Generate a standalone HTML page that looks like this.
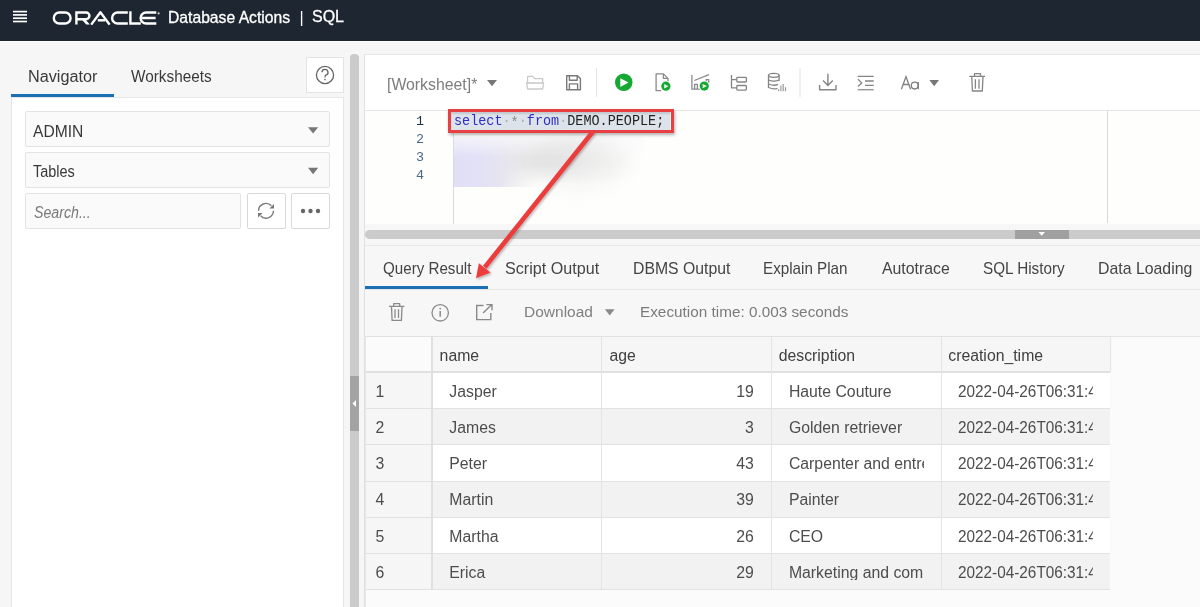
<!DOCTYPE html>
<html><head><meta charset="utf-8">
<style>
*{box-sizing:border-box;margin:0;padding:0}
html,body{width:1200px;height:607px;overflow:hidden;-webkit-font-smoothing:antialiased;background:#f6f6f6;font-family:"Liberation Sans",sans-serif;color:#333}
.a{position:absolute}
.t{position:absolute;white-space:nowrap;line-height:1}
svg{position:absolute;overflow:visible}
.tab{font-size:15.5px;color:#3a3a3a}
.cell{position:absolute;font-size:15.8px;color:#4d4d4d;white-space:nowrap;line-height:1}
</style></head><body><div style="position:absolute;left:0;top:0;width:1200px;height:607px;will-change:transform">
<!-- header -->
<div class="a" style="left:0;top:0;width:1200px;height:41px;background:#1e2631"></div>
<div class="a" style="left:0;top:41px;width:1200px;height:1px;background:#fff"></div>
<svg style="left:0;top:0" width="200" height="41" viewBox="0 0 200 41">
  <g stroke="#fff" stroke-width="1.7" fill="none">
    <line x1="13" y1="11.6" x2="27" y2="11.6"/><line x1="13" y1="14.9" x2="27" y2="14.9"/><line x1="13" y1="18.2" x2="27" y2="18.2"/><line x1="13" y1="21.5" x2="27" y2="21.5"/>
  </g>
  <g stroke="#fff" stroke-width="2.4" fill="none">
    <rect x="53.8" y="12.5" width="16.8" height="11" rx="5.5"/>
    <path d="M76.4,24.6 V12.5 H86.1 A3.35,3.35 0 0 1 86.1,19.2 H77"/></g><polygon points="80.6,18.2 84.2,18.2 89.9,24.6 86.2,24.6" fill="#fff"/><g stroke="#fff" stroke-width="2.4" fill="none">
    <path d="M91.2,24.6 L100.4,12.3 L109.6,24.6" stroke-linejoin="round"/>
    <path d="M97.8,20.3 H105"/>
    <path d="M127.8,12.5 H117.6 A5.5,5.5 0 0 0 117.6,23.5 H127.8"/>
    <path d="M130.4,11.3 V23.5 H140.8"/>
    <path d="M156.3,12.5 H146.1 A5.5,5.5 0 0 0 146.1,23.5 H156.3 M142,18 H155.6"/>
  </g>
  <circle cx="158.6" cy="13.4" r="1.1" fill="#ccc"/>
</svg>
<div class="t" style="left:168px;top:9.9px;color:#fff;font-size:15.7px;-webkit-text-stroke:0.3px #fff">Database Actions</div>
<div class="t" style="left:299.5px;top:10px;color:#fff;font-size:16px">|</div>
<div class="t" style="left:312px;top:8.8px;color:#fff;font-size:16px;-webkit-text-stroke:0.3px #fff">SQL</div>

<!-- left panel tabs -->
<div class="t" style="left:28.13px;top:69.00px;font-size:16px;color:#3a3a3a;transform:scaleX(1.0134);transform-origin:0 0">Navigator</div>
<div class="t" style="left:131.40px;top:68.80px;font-size:16px;color:#3a3a3a;transform:scaleX(0.9576);transform-origin:0 0">Worksheets</div>
<div class="a" style="left:11px;top:94px;width:103px;height:3px;background:#1b6fb5"></div>
<div class="a" style="left:306px;top:57px;width:38px;height:36px;background:#fff;border:1px solid #e3e3e3"></div>
<svg style="left:0;top:0" width="1" height="1">
  <circle cx="325" cy="75" r="8.6" stroke="#666" stroke-width="1.3" fill="none"/>
  <path d="M322,72.3 A3,3 0 1 1 325.8,75.2 C325,75.6 325,76.4 325,77.5" stroke="#666" stroke-width="1.3" fill="none"/>
  <circle cx="325" cy="79.6" r="0.8" fill="#666"/>
</svg>

<!-- left white panel -->
<div class="a" style="left:11px;top:97px;width:333px;height:520px;background:#fff;border:1px solid #e6e6e6"></div>
<div class="a" style="left:25px;top:111px;width:305px;height:36px;background:#fafafa;border:1px solid #e3e3e3;border-radius:2px"></div>
<div class="a" style="left:25px;top:152px;width:305px;height:36px;background:#fafafa;border:1px solid #e3e3e3;border-radius:2px"></div>
<div class="a" style="left:25px;top:193px;width:216px;height:36px;background:#fafafa;border:1px solid #e3e3e3;border-radius:2px"></div>
<div class="a" style="left:247px;top:193px;width:39px;height:36px;background:#fff;border:1px solid #d9d9d9;border-radius:2px"></div>
<div class="a" style="left:291px;top:193px;width:39px;height:36px;background:#fff;border:1px solid #d9d9d9;border-radius:2px"></div>
<div class="t" style="left:33.2px;top:123.8px;font-size:16px;color:#383838;transform:scaleX(0.975);transform-origin:0 0">ADMIN</div>
<div class="t" style="left:33.3px;top:164.3px;font-size:16px;color:#383838;transform:scaleX(0.9033);transform-origin:0 0">Tables</div>
<div class="t" style="left:34.2px;top:204.6px;font-size:16px;color:#7a7a7a;font-style:italic;transform:scaleX(0.8862);transform-origin:0 0">Search...</div>
<svg style="left:0;top:0" width="1" height="1">
  <path d="M308,127.2 H318.2 L313.1,133.5 Z" fill="#777"/>
  <path d="M308,167.8 H318.2 L313.1,174.2 Z" fill="#777"/>
  <g stroke="#7a7a7a" stroke-width="1.4" fill="none">
    <path d="M258.5,210.8 A7.5,7.5 0 0 1 271.4,205.8"/>
    <path d="M273.5,210.8 A7.5,7.5 0 0 1 260.6,215.8"/>
  </g>
  <path d="M274,204 V208.6 H269.4 Z" fill="#777"/>
  <path d="M258,217.6 V213 H262.6 Z" fill="#777"/>
  <circle cx="303" cy="211" r="2.2" fill="#666"/><circle cx="310.5" cy="211" r="2.2" fill="#666"/><circle cx="318" cy="211" r="2.2" fill="#666"/>
</svg>

<!-- splitter -->
<div class="a" style="left:350px;top:54px;width:9px;height:560px;background:#cbcbcb;border-radius:4px 4px 0 0"></div>
<div class="a" style="left:350px;top:376px;width:9px;height:55px;background:#a3a3a3"></div>
<svg style="left:0;top:0" width="1" height="1"><path d="M352.5,403.5 L356,400 V407 Z" fill="#fff"/></svg>

<!-- editor panel -->
<div class="a" style="left:364px;top:54px;width:840px;height:560px;background:#f7f7f7;border-left:1px solid #e0e0e0;border-top:1px solid #e6e6e6"></div>
<div class="a" style="left:365px;top:55px;width:840px;height:56px;background:#fff;border-bottom:1px solid #e6e6e6"></div>
<div class="a" style="left:365px;top:111px;width:840px;height:113px;background:#fefefd"></div>


<!-- toolbar -->
<div class="t" style="left:386.61px;top:76.60px;font-size:16px;color:#7d7d7d;transform:scaleX(0.9889);transform-origin:0 0">[Worksheet]*</div>
<svg style="left:0;top:0" width="1" height="1">
  <path d="M487,80 H497 L492,86.3 Z" fill="#777"/>
  <g fill="none" stroke="#c9c9c9" stroke-width="1.3" stroke-linejoin="round">
    <path d="M527.6,83 V76.4 H532.8 L534.6,78.6 H542.6 V83"/>
    <path d="M526.6,83 H543.6 L542.6,89 H527.6 Z"/>
  </g>
  <g fill="none" stroke="#7a7a7a" stroke-width="1.4" stroke-linejoin="round">
    <path d="M566.7,75.7 H577.5 L580.4,78.4 V89.8 H566.7 Z"/>
    <path d="M569.4,75.7 V80.3 H577.2 V75.9"/>
    <path d="M569.4,89.8 V83.9 H577.6 V89.8"/>
  </g>
  <rect x="596" y="68" width="1" height="29" fill="#e4e4e4"/>
  <circle cx="623.75" cy="82.25" r="8.75" fill="#17a834"/>
  <path d="M620.3,78.2 L628.5,82.6 L620.3,87 Z" fill="#fff"/>
  <g fill="none" stroke="#8a8a8a" stroke-width="1.3" stroke-linejoin="round">
    <path d="M661,90.7 H656.1 V73.9 H663.4 L668,78.4 V82"/>
    <path d="M663.4,73.9 V78.4 H668"/>
  </g>
  <circle cx="665.9" cy="86.2" r="5.6" fill="#fff"/>
  <circle cx="665.9" cy="86.2" r="4.6" fill="#17a834"/>
  <path d="M664.2,84 L668.6,86.2 L664.2,88.4 Z" fill="#e9f9ea"/>
  <g fill="none" stroke="#8a8a8a" stroke-width="1.3">
    <path d="M691.9,75 V89.2 H700"/>
    <path d="M694.3,80.5 L709,74.7"/>
    <path d="M694.6,89 V84.3 H697.4 V89"/>
    <path d="M706.2,82 V79.6 H708.7 V83"/>
  </g>
  <circle cx="704.25" cy="86.1" r="5.6" fill="#fff"/>
  <circle cx="704.25" cy="86.1" r="4.6" fill="#17a834"/>
  <path d="M702.6,83.9 L707,86.1 L702.6,88.3 Z" fill="#e9f9ea"/>
  <g fill="none" stroke="#858585" stroke-width="1.3" stroke-linejoin="round">
    <path d="M731.5,75 V87.8 H736.6 M731.5,79.7 H736.6"/>
    <rect x="736.8" y="77.4" width="9.6" height="4.6" rx="0.8"/>
    <rect x="736.8" y="85.5" width="9.6" height="4.6" rx="0.8"/>
  </g>
  <g fill="none" stroke="#858585" stroke-width="1.3">
    <ellipse cx="773.8" cy="75.3" rx="5.3" ry="2"/>
    <path d="M768.5,75.3 V87.5 Q773.8,89.8 777.5,88.3"/>
    <path d="M779.1,75.3 V81"/>
    <path d="M768.5,80 Q773.8,82.3 779.1,80"/>
    <path d="M768.5,84 Q773.8,86.3 778,84.4"/>
  </g>
  <g stroke="#999" stroke-width="1.2">
    <path d="M778.6,91.2 V89.2 M780.9,91.2 V85.6 M783.2,91.2 V84 M785.5,91.2 V87.2"/>
  </g>
  <rect x="799.5" y="68" width="1" height="29" fill="#e4e4e4"/>
  <g fill="none" stroke="#858585" stroke-width="1.4" stroke-linejoin="round">
    <path d="M827.9,73.7 V85.2 M823,80.6 L827.9,85.4 L832.8,80.6"/>
    <path d="M819.6,85 V89.8 H836 V85"/>
  </g>
  <g fill="none" stroke="#858585" stroke-width="1.3">
    <path d="M857.7,76.3 H873.7 M865,81 H873.7 M865,85.3 H873.7"/>
    <path d="M858,79.3 L861.7,82.9 L858,86.5"/>
  </g>
  <path d="M857.7,89.7 H873.7" stroke="#9a9a9a" stroke-width="1.5"/>
  <g fill="none" stroke="#7f7f7f" stroke-width="1.3">
    <path d="M901.4,89.3 L906,76.6 L910.6,89.3 M903.2,84.5 H908.8"/>
    <circle cx="914.7" cy="85.6" r="3.4"/>
    <path d="M918.3,82 V89.2"/>
  </g>
  <path d="M929.3,80 H939 L934.2,86.3 Z" fill="#777"/>
  <g fill="none" stroke="#858585" stroke-width="1.3" stroke-linejoin="round">
    <path d="M969.3,76.4 H985 M974.5,76.2 V73.6 H980.5 V76.2"/>
    <path d="M971.8,76.6 L972.4,91 H982.3 L983,76.6"/>
    <path d="M975.4,79.3 V88.7 M979,79.3 V88.7"/>
  </g>
</svg>

<!-- editor content -->
<div class="a" style="left:453px;top:111px;width:1px;height:113px;background:#dcdcdc"></div>
<div class="a" style="left:1107px;top:111px;width:1px;height:112px;background:#d9d9d9"></div>
<div class="a" style="left:365px;top:224px;width:840px;height:21px;background:#f7f7f7"></div>
<div class="a" style="left:365px;top:230px;width:840px;height:9px;background:#cbcbcb;border-radius:4.5px 0 0 4.5px"></div>
<div class="a" style="left:1015px;top:230px;width:54px;height:9px;background:#a0a0a0"></div>
<svg style="left:0;top:0" width="1" height="1"><path d="M1038.5,232 H1045 L1041.75,235.8 Z" fill="#fff"/></svg>
<div class="a" style="left:365px;top:245px;width:840px;height:1px;background:#e8e8e8"></div>
<div class="t" style="left:416px;top:114.5px;font-family:'Liberation Mono',monospace;font-size:13.4px;color:#1f3346">1</div>
<div class="t" style="left:416px;top:132.6px;font-family:'Liberation Mono',monospace;font-size:13.4px;color:#4a6880">2</div>
<div class="t" style="left:416px;top:150.7px;font-family:'Liberation Mono',monospace;font-size:13.4px;color:#4a6880">3</div>
<div class="t" style="left:416px;top:168.8px;font-family:'Liberation Mono',monospace;font-size:13.4px;color:#4a6880">4</div>
<!-- blurred lines -->
<div class="a" style="left:454px;top:137px;width:190px;height:50px;background:linear-gradient(to right,#e1dff7 0%,#e3e1f6 14%,#e6e5f0 26%,#e8e8ea 36%,#e9e9e9 50%,#ececec 62%,rgba(243,243,242,0.7) 78%,rgba(254,254,253,0) 100%)"></div>
<div class="a" style="left:454px;top:137px;width:190px;height:20px;background:linear-gradient(to bottom,rgba(250,250,252,0.75),rgba(250,250,252,0))"></div>
<div class="a" style="left:500px;top:164px;width:150px;height:24px;background:linear-gradient(to bottom,rgba(254,254,253,0),rgba(254,254,253,1) 85%);-webkit-mask-image:linear-gradient(to right,transparent 0,#000 40px)"></div>
<div class="a" style="left:530px;top:134px;width:95px;height:56px;border-radius:50%;background:rgba(205,205,205,0.18);filter:blur(9px)"></div>
<!-- selection + code -->
<div class="a" style="left:451px;top:112px;width:219px;height:18px;background:#dde3ea"></div>
<div class="t" style="left:454.2px;top:113.5px;font-family:'Liberation Mono',monospace;font-size:15px;color:#222;transform:scaleX(0.898);transform-origin:0 0"><span style="color:#2e2ec4">select</span><span style="color:#b0b0b0">&#183;</span><span style="color:#8a8a8a;position:relative;top:2.6px">*</span><span style="color:#b0b0b0">&#183;</span><span style="color:#2e2ec4">from</span><span style="color:#b0b0b0">&#183;</span>DEMO.PEOPLE;</div>
<div class="a" style="left:447.6px;top:108.6px;width:226px;height:24px;border:3px solid #e83f42;box-shadow:1px 2px 3px rgba(0,0,0,0.3), inset 0 2px 2px rgba(0,0,0,0.12)"></div>

<!-- results -->
<div class="t" style="left:382.65px;top:260.00px;font-size:16.2px;color:#444;transform:scaleX(0.936);transform-origin:0 0">Query Result</div>
<div class="t" style="left:504.85px;top:260.00px;font-size:16.2px;color:#444;transform:scaleX(0.9963);transform-origin:0 0">Script Output</div>
<div class="t" style="left:632.78px;top:260.00px;font-size:16.2px;color:#444;transform:scaleX(0.9746);transform-origin:0 0">DBMS Output</div>
<div class="t" style="left:763.43px;top:260.00px;font-size:16.2px;color:#444;transform:scaleX(0.939);transform-origin:0 0">Explain Plan</div>
<div class="t" style="left:881.80px;top:260.00px;font-size:16.2px;color:#444;transform:scaleX(0.9775);transform-origin:0 0">Autotrace</div>
<div class="t" style="left:983.09px;top:260.00px;font-size:16.2px;color:#444;transform:scaleX(0.9423);transform-origin:0 0">SQL History</div>
<div class="t" style="left:1098.18px;top:260.00px;font-size:16.2px;color:#444;transform:scaleX(0.9798);transform-origin:0 0">Data Loading</div>
<div class="a" style="left:365px;top:289px;width:840px;height:1px;background:#e6e6e6"></div>
<div class="a" style="left:365px;top:285.7px;width:123px;height:3.2px;background:#1b6fb5"></div>
<svg style="left:0;top:0" width="1" height="1">
  <g fill="none" stroke="#8a8a8a" stroke-width="1.3" stroke-linejoin="round">
    <path d="M389,306.4 H404.4 M393.7,306.2 V303.6 H399.7 V306.2"/>
    <path d="M391.5,306.6 L392.1,320.4 H401.4 L402,306.6"/>
    <path d="M395,309.3 V318 M398.5,309.3 V318"/>
  </g>
  <circle cx="440.2" cy="312.8" r="8.2" fill="none" stroke="#8a8a8a" stroke-width="1.3"/>
  <path d="M440.2,311 V316.8" stroke="#8a8a8a" stroke-width="1.5"/>
  <circle cx="440.2" cy="308.6" r="0.9" fill="#8a8a8a"/>
  <g fill="none" stroke="#8a8a8a" stroke-width="1.4">
    <path d="M483.5,305.5 H476.7 V319.6 H490.8 V313"/>
    <path d="M483,313 L491.8,304.4 M486.4,304.6 H492 V310.2"/>
  </g>
  <path d="M604.9,309.3 H614.6 L609.75,315.5 Z" fill="#8a8a8a"/>
</svg>
<div class="t" style="left:524.00px;top:304.30px;font-size:15.5px;color:#808080;transform:scaleX(1.0);transform-origin:0 0">Download</div>
<div class="t" style="left:639.97px;top:303.60px;font-size:15.5px;color:#7a7a7a;transform:scaleX(0.9876);transform-origin:0 0">Execution time: 0.003 seconds</div>
<div class="a" style="left:365px;top:335.5px;width:840px;height:1px;background:#e4e4e4"></div>
<div class="a" style="left:366px;top:336.5px;width:840px;height:271px;background:#fbfbfb"></div>
<div class="a" style="left:366px;top:336.5px;width:743.5px;height:35px;background:#f6f6f6;box-shadow:1px 0 1px rgba(0,0,0,0.08)"></div>
<div class="a" style="left:366px;top:371.3px;width:743.5px;height:2px;background:#e0e0e0"></div>
<div class="a" style="left:366px;top:373.30px;width:66px;height:36.08px;background:#f6f6f6;border-bottom:1px solid #e2e2e2"></div>
<div class="a" style="left:432px;top:373.30px;width:677.5px;height:36.08px;background:#ffffff;border-bottom:1px solid #e2e2e2"></div>
<div class="a" style="left:366px;top:409.38px;width:66px;height:36.08px;background:#f6f6f6;border-bottom:1px solid #e2e2e2"></div>
<div class="a" style="left:432px;top:409.38px;width:677.5px;height:36.08px;background:#f2f2f2;border-bottom:1px solid #e2e2e2"></div>
<div class="a" style="left:366px;top:445.46px;width:66px;height:36.08px;background:#f6f6f6;border-bottom:1px solid #e2e2e2"></div>
<div class="a" style="left:432px;top:445.46px;width:677.5px;height:36.08px;background:#ffffff;border-bottom:1px solid #e2e2e2"></div>
<div class="a" style="left:366px;top:481.54px;width:66px;height:36.08px;background:#f6f6f6;border-bottom:1px solid #e2e2e2"></div>
<div class="a" style="left:432px;top:481.54px;width:677.5px;height:36.08px;background:#f2f2f2;border-bottom:1px solid #e2e2e2"></div>
<div class="a" style="left:366px;top:517.62px;width:66px;height:36.08px;background:#f6f6f6;border-bottom:1px solid #e2e2e2"></div>
<div class="a" style="left:432px;top:517.62px;width:677.5px;height:36.08px;background:#ffffff;border-bottom:1px solid #e2e2e2"></div>
<div class="a" style="left:366px;top:553.70px;width:66px;height:36.08px;background:#f6f6f6;border-bottom:1px solid #e2e2e2"></div>
<div class="a" style="left:432px;top:553.70px;width:677.5px;height:36.08px;background:#f2f2f2;border-bottom:1px solid #e2e2e2"></div>
<div class="a" style="left:601.3px;top:336.5px;width:1px;height:252.8px;background:#e4e4e4"></div>
<div class="a" style="left:770.5px;top:336.5px;width:1px;height:252.8px;background:#e4e4e4"></div>
<div class="a" style="left:940.5px;top:336.5px;width:1px;height:252.8px;background:#e4e4e4"></div>
<div class="a" style="left:431px;top:336.5px;width:1.6px;height:252.8px;background:#e0e0e0"></div>
<div class="a" style="left:366px;top:336.5px;width:65px;height:34.8px;background:#fbfbfb"></div>
<div class="cell" style="left:439.6px;top:347.50px;font-size:15.8px;color:#404040">name</div>
<div class="cell" style="left:609.5px;top:347.50px;font-size:15.8px;color:#404040">age</div>
<div class="cell" style="left:778.74px;top:347.50px;font-size:15.8px;color:#404040">description</div>
<div class="cell" style="left:948.25px;top:347.50px;font-size:15.8px;color:#404040">creation_time</div>
<div class="cell" style="left:375.6px;top:384.25px">1</div>
<div class="cell" style="left:449.3px;top:384.25px">Jasper</div>
<div class="cell" style="left:602px;width:151.8px;text-align:right;top:384.25px">19</div>
<div class="cell" style="left:788.9px;width:135.5px;overflow:hidden;top:384.25px">Haute Couture</div>
<div class="cell" style="left:957.8px;width:139.2px;overflow:hidden;transform:scaleX(0.97);transform-origin:0 0;top:384.25px">2022-04-26T06:31:45</div>
<div class="cell" style="left:375.6px;top:420.33px">2</div>
<div class="cell" style="left:449.3px;top:420.33px">James</div>
<div class="cell" style="left:602px;width:151.8px;text-align:right;top:420.33px">3</div>
<div class="cell" style="left:788.9px;width:135.5px;overflow:hidden;top:420.33px">Golden retriever</div>
<div class="cell" style="left:957.8px;width:139.2px;overflow:hidden;transform:scaleX(0.97);transform-origin:0 0;top:420.33px">2022-04-26T06:31:45</div>
<div class="cell" style="left:375.6px;top:456.41px">3</div>
<div class="cell" style="left:449.3px;top:456.41px">Peter</div>
<div class="cell" style="left:602px;width:151.8px;text-align:right;top:456.41px">43</div>
<div class="cell" style="left:788.9px;width:135.5px;overflow:hidden;top:456.41px">Carpenter and entrepreneur</div>
<div class="cell" style="left:957.8px;width:139.2px;overflow:hidden;transform:scaleX(0.97);transform-origin:0 0;top:456.41px">2022-04-26T06:31:45</div>
<div class="cell" style="left:375.6px;top:492.49px">4</div>
<div class="cell" style="left:449.3px;top:492.49px">Martin</div>
<div class="cell" style="left:602px;width:151.8px;text-align:right;top:492.49px">39</div>
<div class="cell" style="left:788.9px;width:135.5px;overflow:hidden;top:492.49px">Painter</div>
<div class="cell" style="left:957.8px;width:139.2px;overflow:hidden;transform:scaleX(0.97);transform-origin:0 0;top:492.49px">2022-04-26T06:31:45</div>
<div class="cell" style="left:375.6px;top:528.57px">5</div>
<div class="cell" style="left:449.3px;top:528.57px">Martha</div>
<div class="cell" style="left:602px;width:151.8px;text-align:right;top:528.57px">26</div>
<div class="cell" style="left:788.9px;width:135.5px;overflow:hidden;top:528.57px">CEO</div>
<div class="cell" style="left:957.8px;width:139.2px;overflow:hidden;transform:scaleX(0.97);transform-origin:0 0;top:528.57px">2022-04-26T06:31:45</div>
<div class="cell" style="left:375.6px;top:564.65px">6</div>
<div class="cell" style="left:449.3px;top:564.65px">Erica</div>
<div class="cell" style="left:602px;width:151.8px;text-align:right;top:564.65px">29</div>
<div class="cell" style="left:788.9px;width:135.5px;overflow:hidden;top:564.65px">Marketing and communications</div>
<div class="cell" style="left:957.8px;width:139.2px;overflow:hidden;transform:scaleX(0.97);transform-origin:0 0;top:564.65px">2022-04-26T06:31:45</div>
<div class="a" style="left:365px;top:336px;width:1px;height:271px;background:#e6e6e6"></div>
<svg style="left:0;top:0" width="1200" height="607" viewBox="0 0 1200 607">
  <defs><filter id="sh" x="-20%" y="-20%" width="140%" height="140%"><feDropShadow dx="1.2" dy="1.5" stdDeviation="1.1" flood-color="#000" flood-opacity="0.28"/></filter></defs>
  <g filter="url(#sh)">
    <path d="M593,131.5 L484.8,267.2" stroke="#ec3c3e" stroke-width="4.6" stroke-linecap="butt"/>
    <path d="M476,278.3 L478.9,263.3 L490.6,272.5 Z" fill="#ec3c3e"/>
  </g>
</svg>
</div></body></html>
